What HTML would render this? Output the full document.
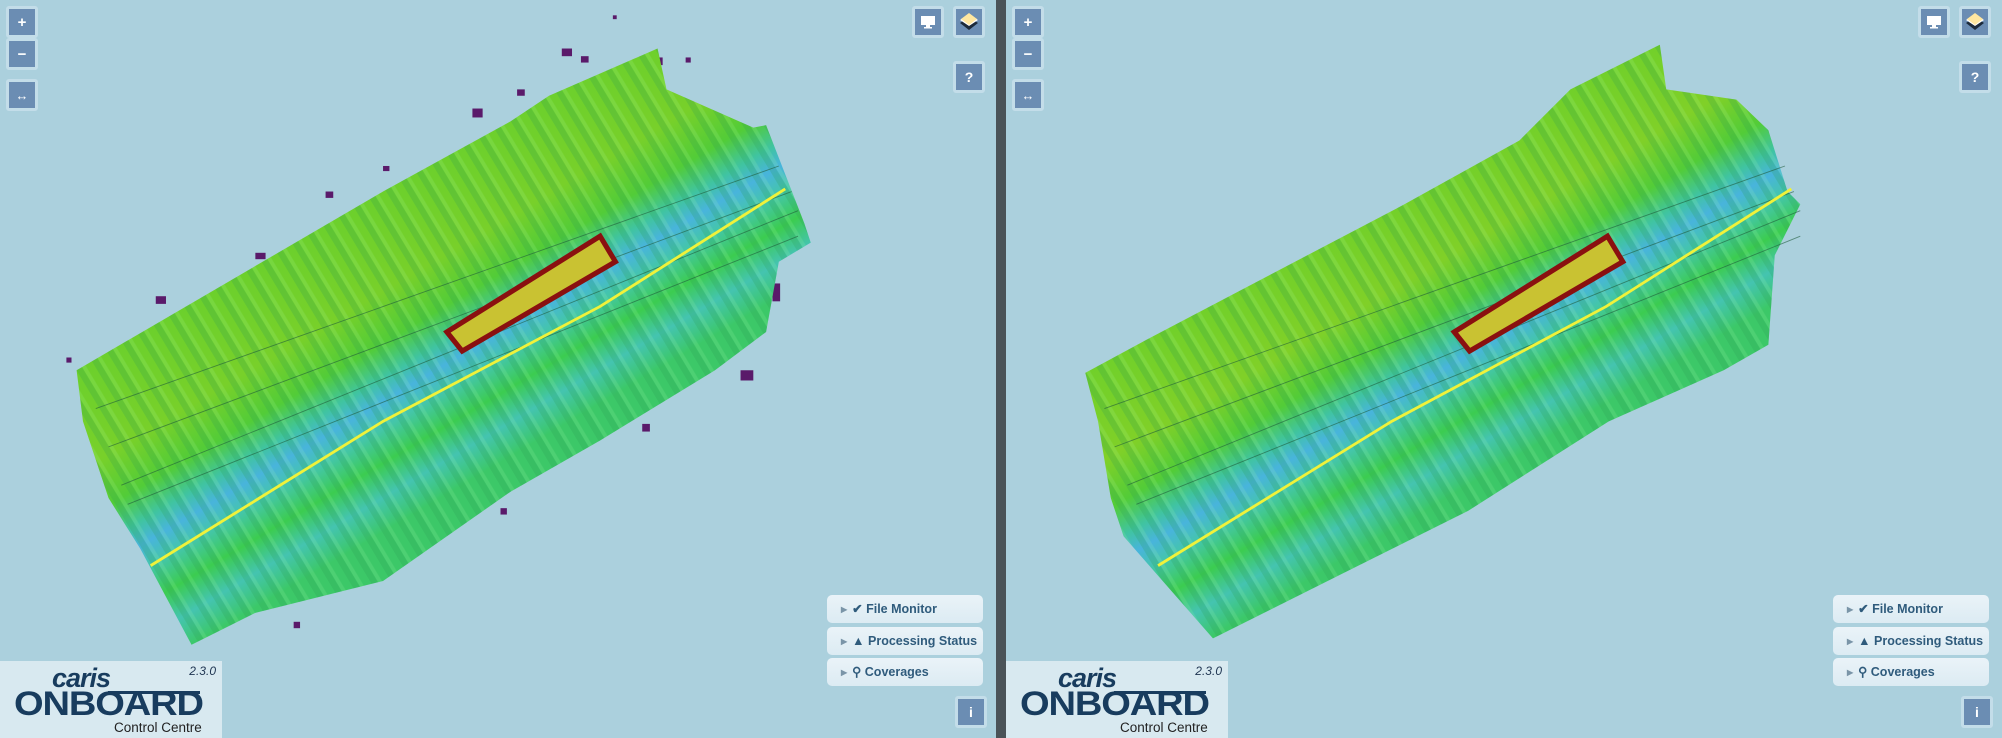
<!DOCTYPE html>
<html><head><meta charset="utf-8">
<style>
*{margin:0;padding:0;box-sizing:border-box}
body{width:2002px;height:738px;overflow:hidden;background:#abd0dd;font-family:"Liberation Sans",sans-serif;position:relative}
.btn{position:absolute;width:32px;height:32px;background:#6b8db3;border:3px solid #c3dde9;border-radius:3px;color:#fff;font-weight:bold;font-size:15px;display:flex;align-items:center;justify-content:center}
.pn{position:absolute;left:827px;width:156px;height:28px;background:linear-gradient(#eaf3f8,#dcebf3);border-radius:5px;color:#2f5b7c;font-weight:bold;font-size:12.5px;line-height:28px;padding-left:14px;white-space:nowrap}
.pn .a{font-size:8px;color:#7a95a8;margin-right:5px;vertical-align:1px}
.logo{position:absolute;left:0;top:661px;width:222px;height:77px;background:#d8e9f0}
.logo .v{position:absolute;right:6px;top:3px;font-style:italic;font-size:12px;color:#1d3350}
.logo .c{position:absolute;left:52px;top:2px;font-style:italic;font-weight:bold;font-size:27px;color:#183c5e;letter-spacing:-1px}
.logo .o{position:absolute;left:14px;top:24px;font-size:34px;font-weight:bold;color:#183c5e;letter-spacing:-1px;transform:scaleX(1.12);transform-origin:left}
.logo .cc{position:absolute;left:114px;top:59px;font-size:13.5px;color:#222}
.logo .ln{position:absolute;left:108px;top:30px;width:92px;height:3px;background:#183c5e}
</style></head><body>

<svg width="2002" height="738" style="position:absolute;left:0;top:0" xmlns="http://www.w3.org/2000/svg">
<defs>
<linearGradient id="gL" gradientUnits="userSpaceOnUse" x1="60" y1="290" x2="178" y2="489">
<stop offset="0" stop-color="#6cd02c"/><stop offset="0.3" stop-color="#78d02a"/><stop offset="0.45" stop-color="#52cc38"/><stop offset="0.55" stop-color="#40c4a0"/><stop offset="0.62" stop-color="#48b4dc"/><stop offset="0.7" stop-color="#44c6a8"/><stop offset="0.8" stop-color="#3ccc50"/><stop offset="0.9" stop-color="#44c4b0"/><stop offset="1" stop-color="#3cc868"/>
</linearGradient>
<linearGradient id="gR" gradientUnits="userSpaceOnUse" x1="848" y1="290" x2="966" y2="489">
<stop offset="0" stop-color="#70d02a"/><stop offset="0.3" stop-color="#80d028"/><stop offset="0.45" stop-color="#52cc38"/><stop offset="0.55" stop-color="#40c4a0"/><stop offset="0.62" stop-color="#48b4dc"/><stop offset="0.7" stop-color="#44c6a8"/><stop offset="0.8" stop-color="#3ccc50"/><stop offset="0.9" stop-color="#44c4b0"/><stop offset="1" stop-color="#3cc868"/>
</linearGradient>
<pattern id="rip" patternUnits="userSpaceOnUse" width="14" height="14" patternTransform="rotate(-31)">
<rect x="0" y="0" width="5" height="14" fill="#2a9a50" opacity="0.22"/><rect x="5" y="0" width="3" height="14" fill="#b0ffb0" opacity="0.15"/>
</pattern>
<clipPath id="cL"><polygon points="60,290 120,255 300,150 400,95 430,75 515,38 522,70 590,100 600,98 630,175 635,190 610,205 600,260 560,290 470,345 400,385 300,455 200,480 150,505 110,430 85,390 65,330"/></clipPath>
<clipPath id="cR"><polygon points="850,292 900,265 1100,160 1190,110 1230,70 1300,35 1305,70 1360,78 1385,102 1400,150 1410,160 1390,200 1385,270 1350,290 1260,330 1150,400 1050,450 950,500 880,420 870,390 860,330"/></clipPath>
</defs>
<g transform="scale(1.2768)">
<!-- left -->
<g fill="#5a1a6a">
<rect x="440" y="38" width="8" height="6"/><rect x="455" y="44" width="6" height="5"/><rect x="405" y="70" width="6" height="5"/><rect x="370" y="85" width="8" height="7"/><rect x="300" y="130" width="5" height="4"/><rect x="255" y="150" width="6" height="5"/><rect x="200" y="198" width="8" height="5"/><rect x="122" y="232" width="8" height="6"/><rect x="605" y="222" width="6" height="14"/><rect x="580" y="290" width="10" height="8"/><rect x="503" y="332" width="6" height="6"/><rect x="392" y="398" width="5" height="5"/><rect x="230" y="487" width="5" height="5"/><rect x="52" y="280" width="4" height="4"/><rect x="480" y="12" width="3" height="3"/><rect x="515" y="45" width="4" height="6"/><rect x="537" y="45" width="4" height="4"/></g>
<polygon fill="url(#gL)" points="60,290 120,255 300,150 400,95 430,75 515,38 522,70 590,100 600,98 630,175 635,190 610,205 600,260 560,290 470,345 400,385 300,455 200,480 150,505 110,430 85,390 65,330"/>
<rect x="0" y="0" width="700" height="560" fill="url(#rip)" clip-path="url(#cL)"/>
<g stroke="#1f5a3a" stroke-width="0.7" fill="none" opacity="0.6">
<path d="M75,320 L610,130"/><path d="M85,350 L620,150"/><path d="M95,380 L625,165"/><path d="M100,395 L625,185"/></g>
<path d="M118,443 L300,330 L470,240 L615,148" stroke="#f0f23a" stroke-width="2.2" fill="none"/>
<polygon points="350,260 470,185 482,205 362,275" fill="#c9c232" stroke="#8a1010" stroke-width="4"/>
<!-- right -->
<polygon fill="url(#gR)" points="850,292 900,265 1100,160 1190,110 1230,70 1300,35 1305,70 1360,78 1385,102 1400,150 1410,160 1390,200 1385,270 1350,290 1260,330 1150,400 1050,450 950,500 880,420 870,390 860,330"/>
<rect x="780" y="0" width="700" height="560" fill="url(#rip)" clip-path="url(#cR)"/>
<g stroke="#1f5a3a" stroke-width="0.7" fill="none" opacity="0.6">
<path d="M865,320 L1398,130"/><path d="M873,350 L1405,150"/><path d="M883,380 L1410,165"/><path d="M890,395 L1410,185"/></g>
<path d="M907,443 L1090,330 L1258,240 L1403,148" stroke="#f0f23a" stroke-width="2.2" fill="none"/>
<polygon points="1139,260 1259,185 1271,205 1151,275" fill="#c9c232" stroke="#8a1010" stroke-width="4"/>
</g>
<rect x="996" y="0" width="10" height="738" fill="#4a5358"/>
</svg>

<div class="btn" style="left:6px;top:6px">+</div>
<div class="btn" style="left:6px;top:38px">−</div>
<div class="btn" style="left:6px;top:79px;font-size:13px">↔</div>
<div class="btn" style="left:912px;top:6px"><svg width="16" height="14"><rect x="1" y="1" width="14" height="9" fill="#fff"/><rect x="6" y="10" width="4" height="2" fill="#fff"/><rect x="4" y="12" width="8" height="1.5" fill="#fff"/></svg></div>
<div class="btn" style="left:953px;top:6px"><svg width="22" height="22"><polygon points="11,6 20,12 11,19 2,12" fill="#1c2a3a"/><polygon points="11,3 20,9 11,15 2,9" fill="#fff"/><polygon points="11,2 19,8 11,14 3,8" fill="#ffe7a0"/></svg></div>
<div class="btn" style="left:953px;top:61px;font-size:14px">?</div>
<div class="pn" style="top:595px"><span class="a">▶</span>✔ File Monitor</div>
<div class="pn" style="top:627px"><span class="a">▶</span>▲ Processing Status</div>
<div class="pn" style="top:658px"><span class="a">▶</span>⚲ Coverages</div>
<div class="btn" style="left:955px;top:696px;font-size:14px">i</div>
<div class="logo"><div class="v">2.3.0</div><div class="c">caris</div><div class="ln"></div><div class="o">ONBOARD</div><div class="cc">Control Centre</div></div>

<div style="position:absolute;left:1006px;top:0;width:996px;height:738px">
<div class="btn" style="left:6px;top:6px">+</div>
<div class="btn" style="left:6px;top:38px">−</div>
<div class="btn" style="left:6px;top:79px;font-size:13px">↔</div>
<div class="btn" style="left:912px;top:6px"><svg width="16" height="14"><rect x="1" y="1" width="14" height="9" fill="#fff"/><rect x="6" y="10" width="4" height="2" fill="#fff"/><rect x="4" y="12" width="8" height="1.5" fill="#fff"/></svg></div>
<div class="btn" style="left:953px;top:6px"><svg width="22" height="22"><polygon points="11,6 20,12 11,19 2,12" fill="#1c2a3a"/><polygon points="11,3 20,9 11,15 2,9" fill="#fff"/><polygon points="11,2 19,8 11,14 3,8" fill="#ffe7a0"/></svg></div>
<div class="btn" style="left:953px;top:61px;font-size:14px">?</div>
<div class="pn" style="top:595px"><span class="a">▶</span>✔ File Monitor</div>
<div class="pn" style="top:627px"><span class="a">▶</span>▲ Processing Status</div>
<div class="pn" style="top:658px"><span class="a">▶</span>⚲ Coverages</div>
<div class="btn" style="left:955px;top:696px;font-size:14px">i</div>
<div class="logo"><div class="v">2.3.0</div><div class="c">caris</div><div class="ln"></div><div class="o">ONBOARD</div><div class="cc">Control Centre</div></div>
</div>
</body></html>
